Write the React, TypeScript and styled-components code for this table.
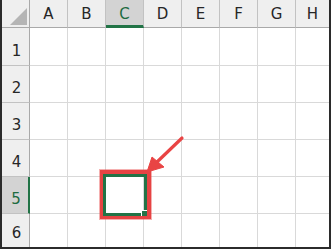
import React from 'react'
import styled, { createGlobalStyle } from 'styled-components'

const GlobalStyle = createGlobalStyle`
  html, body {
    margin: 0;
    padding: 0;
    background: #ffffff;
  }
  * {
    box-sizing: border-box;
  }
`

const COLUMNS = ['A', 'B', 'C', 'D', 'E', 'F', 'G', 'H']
const ROWS = [1, 2, 3, 4, 5, 6]
const ACTIVE_COL = 'C'
const ACTIVE_ROW = 5

export default function App(): JSX.Element {
  return (
    <>
      <GlobalStyle />
      <Frame>
        <Grid>
          <Corner>
            <svg width="17" height="17" viewBox="0 0 17 17">
              <polygon points="17,0 17,17 0,17" fill="#b5b5b5" />
            </svg>
          </Corner>
          {COLUMNS.map((c, i) => (
            <ColHeader key={c} $selected={c === ACTIVE_COL} $last={i === COLUMNS.length - 1}>
              {c}
            </ColHeader>
          ))}
          {ROWS.map((r) => (
            <React.Fragment key={r}>
              <RowHeader $selected={r === ACTIVE_ROW} $last={r === ROWS.length}>
                {r}
              </RowHeader>
              {COLUMNS.map((c, i) => (
                <Cell key={c} $last={i === COLUMNS.length - 1} $lastRow={r === ROWS.length}>
                  {r === ACTIVE_ROW && c === ACTIVE_COL && (
                    <>
                      <Highlight />
                      <Selection>
                        <FillHandle />
                      </Selection>
                    </>
                  )}
                </Cell>
              ))}
            </React.Fragment>
          ))}
        </Grid>
        <Arrow width="331" height="249" viewBox="0 0 331 249">
          <line x1="182" y1="138" x2="157" y2="162" stroke="#e94444" strokeWidth="3.2" strokeLinecap="round" />
          <polygon points="147,172 152,157 164,167" fill="#e94444" stroke="#e94444" strokeWidth="1" strokeLinejoin="round" />
        </Arrow>
      </Frame>
    </>
  )
}

const Frame = styled.div`
  position: relative;
  width: 331px;
  height: 249px;
  border-left: 2px solid #2b2b2b;
  border-right: 2px solid #2b2b2b;
  border-bottom: 2px solid #2b2b2b;
  overflow: hidden;
  font-family: 'DejaVu Sans', 'Noto Sans', sans-serif;
`

const Grid = styled.div`
  display: grid;
  grid-template-columns: 28px repeat(7, 38px) 1fr;
  grid-template-rows: 28px 38px 37px 37px 37px 37px 1fr;
  height: 100%;
`

const Corner = styled.div`
  background: #efefef;
  border-right: 1px solid #a9a9a9;
  border-bottom: 1px solid #a9a9a9;
  display: flex;
  align-items: flex-start;
  justify-content: flex-end;
  padding: 8px 2px 0 0;
`

const ColHeader = styled.div<{ $selected?: boolean; $last?: boolean }>`
  background: ${(p) => (p.$selected ? '#d3d3d3' : '#efefef')};
  border-right: ${(p) => (p.$last ? 'none' : '1px solid #c2c2c2')};
  border-bottom: ${(p) => (p.$selected ? '3px solid #217346' : '1px solid #a9a9a9')};
  color: ${(p) => (p.$selected ? '#1d6b40' : '#262626')};
  display: flex;
  align-items: center;
  justify-content: center;
  font-size: 15px;
  padding-top: ${(p) => (p.$selected ? '2px' : '0')};
`

const RowHeader = styled.div<{ $selected?: boolean; $last?: boolean }>`
  background: ${(p) => (p.$selected ? '#d3d3d3' : '#efefef')};
  border-right: ${(p) => (p.$selected ? '2px solid #217346' : '1px solid #a9a9a9')};
  border-bottom: ${(p) => (p.$last ? 'none' : '1px solid #c2c2c2')};
  color: ${(p) => (p.$selected ? '#1d6b40' : '#262626')};
  display: flex;
  align-items: flex-end;
  justify-content: center;
  padding-bottom: 5px;
  padding-left: 2px;
  font-size: 15px;
`

const Cell = styled.div<{ $last?: boolean; $lastRow?: boolean }>`
  position: relative;
  background: #ffffff;
  border-right: ${(p) => (p.$last ? 'none' : '1px solid #d9d9d9')};
  border-bottom: ${(p) => (p.$lastRow ? 'none' : '1px solid #d9d9d9')};
`

const Highlight = styled.div`
  position: absolute;
  left: -6px;
  top: -7px;
  width: 51px;
  height: 49px;
  border: 4px solid #e64343;
  box-shadow: 0 0 0 1px rgba(233, 80, 80, 0.45), inset 0 0 0 1px rgba(233, 80, 80, 0.35);
  z-index: 1;
`

const Selection = styled.div`
  position: absolute;
  left: -3px;
  top: -3px;
  width: 44px;
  height: 42px;
  border: 3px solid #217346;
  z-index: 2;
`

const FillHandle = styled.div`
  position: absolute;
  right: -3px;
  bottom: -3px;
  width: 6px;
  height: 6px;
  background: #217346;
  border-left: 1px solid #ffffff;
  border-top: 1px solid #ffffff;
`

const Arrow = styled.svg`
  position: absolute;
  left: -2px;
  top: 0;
  pointer-events: none;
  z-index: 3;
`
